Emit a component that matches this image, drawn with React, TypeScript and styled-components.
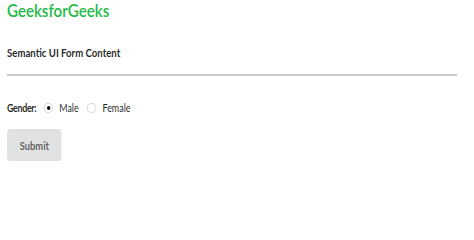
import * as React from 'react'
import styled, { createGlobalStyle } from 'styled-components'

const GlobalStyle = createGlobalStyle`
  body {
    margin: 0;
    background: #fff;
    font-family: Lato, "Helvetica Neue", Arial, sans-serif;
  }
`

// the screenshot is narrower than it is tall, so text is squeezed a little
const squeeze = (x: number) => `
  transform: scaleX(${x});
  transform-origin: left center;
`

const Page = styled.div`
  display: flex;
  flex-direction: column;
  align-items: flex-start;
  padding: 0 17px 0 7px;
`

const Title = styled.h2`
  margin: 0;
  font-size: 18px;
  line-height: 20px;
  font-weight: 600;
  color: #21ba45;
  ${squeeze(0.84)}
`

const SubTitle = styled.h4`
  margin: 26px 0 0;
  font-size: 12px;
  line-height: 14px;
  font-weight: 700;
  color: rgba(0, 0, 0, 0.87);
  ${squeeze(0.8)}
`

const Divider = styled.hr`
  align-self: stretch;
  margin: 14px 0 0;
  border: 0;
  height: 2px;
  background: #cbcbcb;
`

const Form = styled.form`
  display: flex;
  flex-direction: column;
  align-items: flex-start;
  margin-top: 25px;
`

const Field = styled.div`
  display: flex;
  align-items: center;
  height: 14px;
  font-size: 10.5px;
  color: rgba(0, 0, 0, 0.87);
  ${squeeze(0.85)}
`

const Label = styled.span`
  font-weight: 700;
  letter-spacing: -0.4px;
  margin-right: 9px;
`

const Option = styled.label`
  display: flex;
  align-items: center;
  gap: 7px;
  margin-right: 10px;
  cursor: pointer;
`

const Radio = styled.span<{ $checked?: boolean }>`
  position: relative;
  width: 11px;
  height: 10.5px;
  box-sizing: border-box;
  border: 1px solid #d4d4d5;
  border-radius: 50%;
  background: #fff;

  &::after {
    content: '';
    display: ${(p) => (p.$checked ? 'block' : 'none')};
    position: absolute;
    left: 50%;
    top: 50%;
    width: 4.5px;
    height: 4.5px;
    margin: -2.25px 0 0 -2.25px;
    border-radius: 50%;
    background: rgba(0, 0, 0, 0.95);
  }
`

const Button = styled.button`
  margin-top: 14px;
  height: 32px;
  padding: 0 15px;
  border: 0;
  border-radius: 4px;
  background: #e0e1e2;
  font-family: Lato, "Helvetica Neue", Arial, sans-serif;
  font-size: 11px;
  font-weight: 700;
  color: rgba(0, 0, 0, 0.6);
  ${squeeze(0.85)}
`

const App = () => {
  const [gender, setGender] = React.useState('male')

  return (
    <>
      <GlobalStyle />
      <Page>
        <Title>GeeksforGeeks</Title>
        <SubTitle>Semantic UI Form Content</SubTitle>
        <Divider />
        <Form onSubmit={(e) => e.preventDefault()}>
          <Field>
            <Label>Gender:</Label>
            <Option onClick={() => setGender('male')}>
              <Radio $checked={gender === 'male'} />
              Male
            </Option>
            <Option onClick={() => setGender('female')}>
              <Radio $checked={gender === 'female'} />
              Female
            </Option>
          </Field>
          <Button type="submit">Submit</Button>
        </Form>
      </Page>
    </>
  )
}

export default App
